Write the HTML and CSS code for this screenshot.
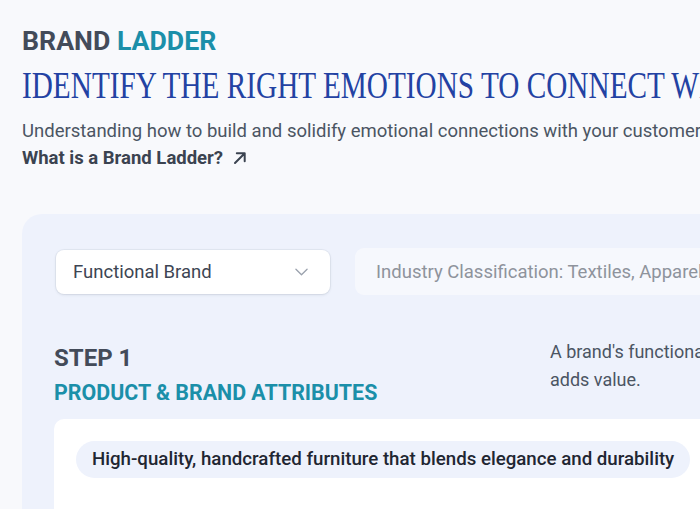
FILE: index.html
```html
<!DOCTYPE html>
<html lang="en">
<head>
<meta charset="utf-8">
<title>Brand Ladder</title>
<link rel="stylesheet" href="styles.css">
</head>
<body>
<main class="page">
  <header class="intro">
    <h2 class="eyebrow">BRAND <span class="accent">LADDER</span></h2>
    <h1 class="title"><span class="title-inner">IDENTIFY THE RIGHT EMOTIONS TO CONNECT WITH YOUR CUSTOMERS</span></h1>
    <p class="lead">Understanding how to build and solidify emotional connections with your customers is key to long-term brand loyalty.</p>
    <a class="link" href="#">What is a Brand Ladder?
      <svg class="arrow" viewBox="0 0 16 16" width="16" height="16" aria-hidden="true"><path d="M3 13 L12.5 3.5 M4.8 3.3 H12.7 V11.2" fill="none" stroke="currentColor" stroke-width="2" stroke-linecap="round" stroke-linejoin="round"/></svg>
    </a>
  </header>

  <section class="card">
    <div class="controls">
      <div class="select">
        <span>Functional Brand</span>
        <svg class="chev" viewBox="0 0 14 8" width="13" height="8" aria-hidden="true"><path d="M1 1 L7 7 L13 1" fill="none" stroke="#9aa1ad" stroke-width="1.4" stroke-linecap="round" stroke-linejoin="round"/></svg>
      </div>
      <div class="input">Industry Classification: Textiles, Apparel &amp; Furniture</div>
    </div>

    <div class="step">
      <div class="step-head">
        <div class="step-num">STEP 1</div>
        <div class="step-name">PRODUCT &amp; BRAND ATTRIBUTES</div>
      </div>
      <p class="step-desc">A brand's functional identity describes how the product works and<br>adds value.</p>
    </div>

    <div class="panel">
      <span class="chip">High-quality, handcrafted furniture that blends elegance and durability</span>
    </div>
  </section>
</main>
</body>
</html>
```

FILE: styles.css
```css
html, body {
  margin: 0;
  padding: 0;
}
body {
  background: #f8f9fc;
  font-family: Roboto, "Liberation Sans", sans-serif;
  color: #4b5563;
  overflow: hidden;
  width: 700px;
  height: 509px;
}
.page {
  width: 1100px;
  padding: 26px 0 0 22px;
}
.intro {
  display: flex;
  flex-direction: column;
  align-items: flex-start;
}
.eyebrow {
  margin: 0;
  font-size: 26.7px;
  font-weight: 700;
  line-height: 30px;
  color: #434b59;
}
.accent {
  color: #1b8fa9;
}
.title {
  margin: 7px 0 0;
  font-family: "Liberation Serif", serif;
  font-weight: 400;
  font-size: 38px;
  line-height: 44px;
  color: #2342a3;
  white-space: nowrap;
}
.title-inner {
  display: inline-block;
  transform: scaleX(0.77);
  transform-origin: left center;
}
.lead {
  margin: 11px 0 0;
  font-size: 18.5px;
  line-height: 27px;
  white-space: nowrap;
  color: #4b5563;
}
.link {
  display: inline-flex;
  align-items: center;
  gap: 9px;
  font-size: 18.5px;
  font-weight: 700;
  line-height: 26px;
  color: #3b4350;
  text-decoration: none;
}
.arrow {
  color: #3b4350;
}
.card {
  margin-top: 43px;
  background: #eef2fc;
  border-radius: 20px;
  padding: 34px 0 0 34px;
  height: 400px;
}
.controls {
  display: flex;
  gap: 25px;
  align-items: center;
}
.select {
  box-sizing: border-box;
  width: 274px;
  height: 44px;
  background: #fff;
  border-radius: 8px;
  box-shadow: 0 1px 3px rgba(60, 70, 100, 0.12), 0 0 0 1px rgba(220, 225, 235, 0.6);
  display: flex;
  align-items: center;
  justify-content: space-between;
  padding: 0 22px 0 17px;
  font-size: 18.5px;
  color: #3d4553;
}
.input {
  box-sizing: border-box;
  width: 600px;
  height: 47px;
  background: #f6f8fd;
  border-radius: 9px;
  display: flex;
  align-items: center;
  padding: 0 21px;
  font-size: 18.5px;
  color: #8e939c;
}
.step {
  display: flex;
  margin-top: 48px;
}
.step-head {
  width: 496px;
  margin-left: -2px;
}
.step-num {
  font-size: 24px;
  font-weight: 700;
  line-height: 30px;
  color: #434b59;
}
.step-name {
  margin-top: 7px;
  font-size: 21.4px;
  font-weight: 700;
  line-height: 26px;
  color: #1b8fa9;
}
.step-desc {
  margin: -5px 0 0;
  width: 500px;
  font-size: 18px;
  line-height: 28px;
  color: #4b5563;
  white-space: nowrap;
}
.panel {
  margin: 13px 0 0 -2px;
  background: #fff;
  border-radius: 10px;
  padding: 22px;
  height: 200px;
}
.chip {
  display: inline-block;
  background: #eef2fc;
  border-radius: 19px;
  padding: 0 16px;
  height: 37px;
  line-height: 37px;
  font-size: 18.7px;
  font-weight: 500;
  color: #1f2632;
}
```
